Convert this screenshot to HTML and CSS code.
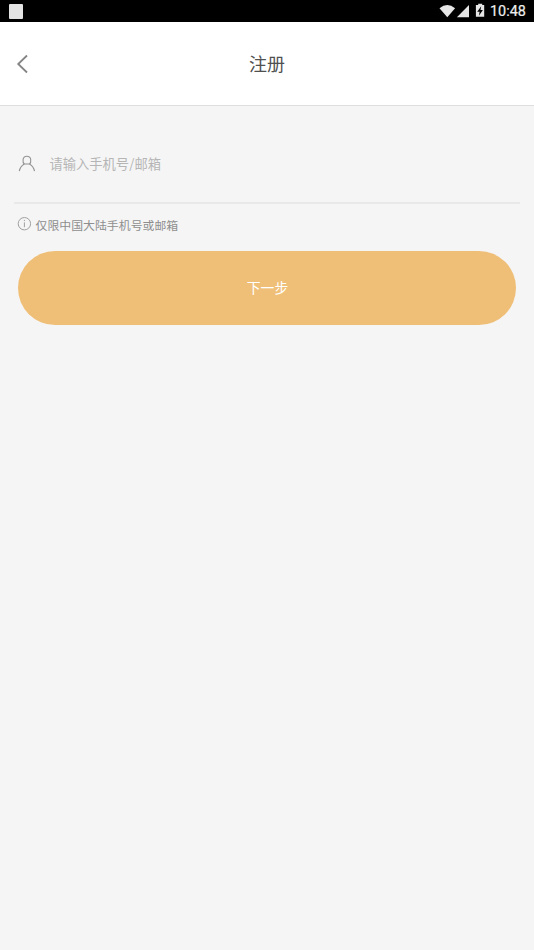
FILE: index.html
```html
<!DOCTYPE html>
<html lang="zh-CN">
<head>
<meta charset="utf-8">
<title>注册</title>
<link rel="stylesheet" href="styles.css">
</head>
<body>
<div class="status">
  <span class="notice"></span>
  <div class="indicators">
    <svg class="signals" width="48" height="22" viewBox="0 0 48 22" fill="#e6e6e6">
      <path d="M1.5 8.2Q9.3 2 17.1 8.2L9.3 17.3Z"/>
      <path d="M31 5v12.3H18.9Z"/>
      <path fill-rule="evenodd" d="M38.2 5h2V3.8h4V5h2v11.8h-8.3V5ZM43.2 6.2l-4 5.5h2.4l-.7 4 4-5.8h-2.4Z"/>
    </svg>
    <span class="time">10:48</span>
  </div>
</div>
<header class="header">
  <svg class="back" width="14" height="20" viewBox="0 0 14 20"><path d="M11 1.5L2.2 10l8.8 8.5"/></svg>
  <h1 class="title">注册</h1>
</header>
<main class="form">
  <label class="field">
    <svg class="user" width="18" height="18" viewBox="0 0 18 18"><path d="M6.3 9C4.6 7.7 4.9 5.8 5.1 4.4 5.4 2.4 7 1.2 8.9 1.2s3.5 1.2 3.8 3.2c.2 1.4.5 3.3-1.2 4.6Z"/><path d="M6.3 9C4 10.3 1.9 12.8 1.3 16.2M11.5 9c2.3 1.3 4.4 3.8 5 7.2"/></svg>
    <input class="account" type="text" placeholder="请输入手机号/邮箱">
  </label>
  <p class="hint">
    <svg class="info" width="14" height="14" viewBox="0 0 14 14"><circle cx="7.4" cy="6.7" r="6.2"/><path d="M7.4 5.4v4.8M7.4 2.9v1.2"/></svg>
    <span>仅限中国大陆手机号或邮箱</span>
  </p>
  <button class="next" type="button">下一步</button>
</main>
</body>
</html>
```
FILE: styles.css
```css
* { box-sizing: border-box; }
body {
  margin: 0;
  min-height: 100vh;
  background: #f5f5f5;
  font-family: "Noto Sans CJK SC", sans-serif;
}
.status {
  display: flex;
  justify-content: space-between;
  height: 22px;
  padding: 0 8px 0 9px;
  background: #000;
}
.notice {
  width: 14px;
  height: 15px;
  margin-top: 4px;
  border-radius: 1px;
  background: #e4e4e4;
}
.indicators { display: flex; }
.signals { margin-right: 4px; }
.time {
  width: 36px;
  font: 400 14.4px/23px Roboto, sans-serif;
  color: #eee;
  -webkit-text-stroke: 0.2px #eee;
  white-space: nowrap;
}
.header {
  display: grid;
  grid-template-columns: 40px 1fr 40px;
  align-items: center;
  height: 84px;
  padding: 0 15px;
  border-bottom: 1px solid #dedede;
  background: #fff;
}
.back { margin-left: 0.8px; fill: none; stroke: #858585; stroke-width: 1.8; }
.title {
  margin: 0;
  padding-bottom: 2px;
  font-size: 18px;
  font-weight: 400;
  line-height: 26px;
  text-align: center;
  color: #505050;
}
.form { padding: 0 14px; }
.field {
  display: flex;
  align-items: center;
  height: 98px;
  padding: 19px 4px 0;
  border-bottom: 2px solid #e9e9e9;
}
.user { fill: none; stroke: #929292; stroke-width: 1.1; }
.account {
  flex: 1;
  height: 30px;
  margin-left: 13.4px;
  padding: 0;
  border: 0;
  outline: 0;
  background: none;
  font: 400 13.3px/20px "Noto Sans CJK SC", sans-serif;
  color: #505050;
}
.account::placeholder { color: #b5b5b5; opacity: 1; }
.hint {
  display: flex;
  align-items: flex-start;
  gap: 4.5px;
  height: 47px;
  margin: 0;
  padding: 12px 0 0 3px;
  font-size: 11.9px;
  line-height: 18px;
  color: #8e8e8e;
}
.info { margin-top: 1px; fill: none; stroke: #a0a0a0; stroke-width: 1; }
.next {
  display: block;
  width: 498px;
  height: 74px;
  margin: 0 auto;
  padding: 0 0 2px 1px;
  border: 0;
  border-radius: 37px;
  background: #efbf78;
  font: 400 13.8px/20px "Noto Sans CJK SC", sans-serif;
  color: #fff;
}
```
